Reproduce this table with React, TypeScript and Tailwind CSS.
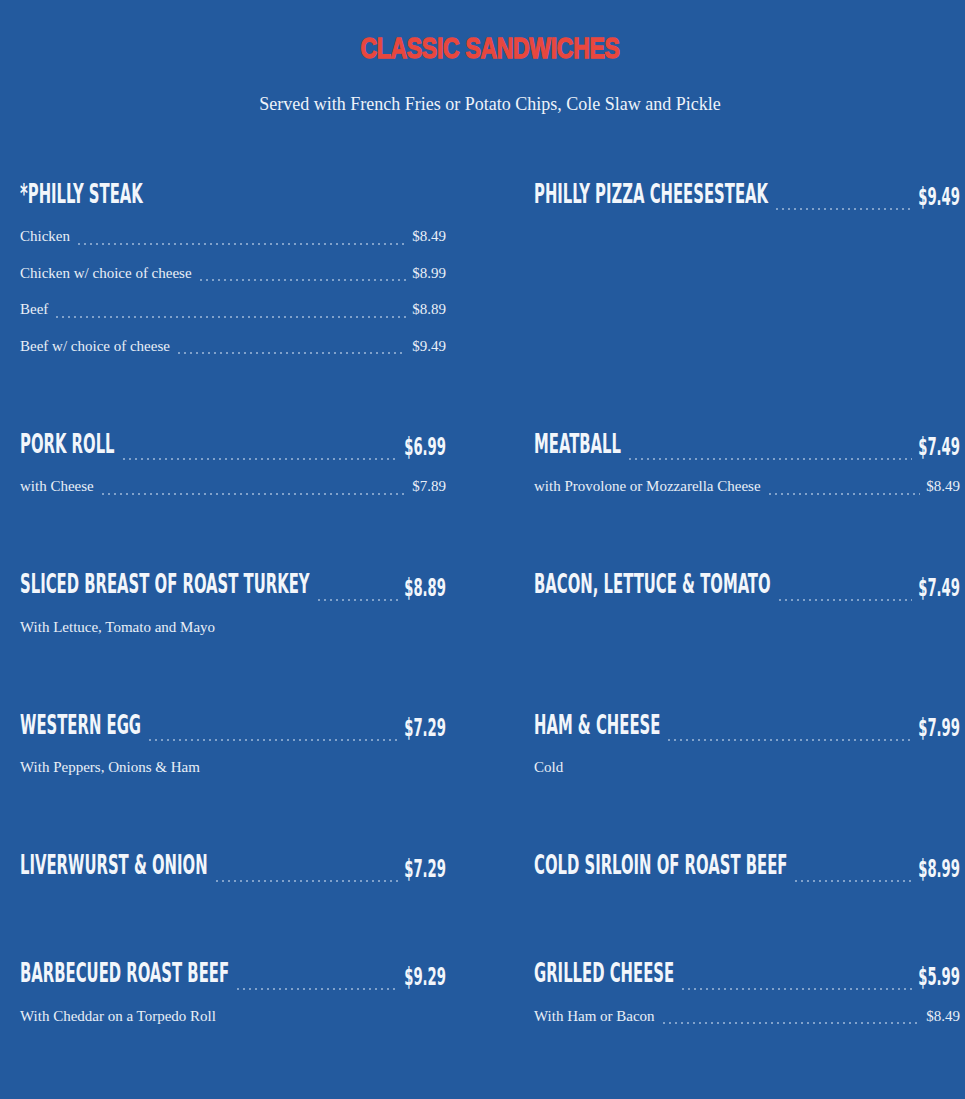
import React from "react";

type Sub = { name: string; price?: string };
type Section = { title: string; price?: string; subs?: Sub[] };

const rows: [Section, Section][] = [
  [
    {
      title: "*PHILLY STEAK",
      subs: [
        { name: "Chicken", price: "$8.49" },
        { name: "Chicken w/ choice of cheese", price: "$8.99" },
        { name: "Beef", price: "$8.89" },
        { name: "Beef w/ choice of cheese", price: "$9.49" },
      ],
    },
    { title: "PHILLY PIZZA CHEESESTEAK", price: "$9.49" },
  ],
  [
    { title: "PORK ROLL", price: "$6.99", subs: [{ name: "with Cheese", price: "$7.89" }] },
    {
      title: "MEATBALL",
      price: "$7.49",
      subs: [{ name: "with Provolone or Mozzarella Cheese", price: "$8.49" }],
    },
  ],
  [
    {
      title: "SLICED BREAST OF ROAST TURKEY",
      price: "$8.89",
      subs: [{ name: "With Lettuce, Tomato and Mayo" }],
    },
    { title: "BACON, LETTUCE & TOMATO", price: "$7.49" },
  ],
  [
    { title: "WESTERN EGG", price: "$7.29", subs: [{ name: "With Peppers, Onions & Ham" }] },
    { title: "HAM & CHEESE", price: "$7.99", subs: [{ name: "Cold" }] },
  ],
  [
    { title: "LIVERWURST & ONION", price: "$7.29" },
    { title: "COLD SIRLOIN OF ROAST BEEF", price: "$8.99" },
  ],
  [
    {
      title: "BARBECUED ROAST BEEF",
      price: "$9.29",
      subs: [{ name: "With Cheddar on a Torpedo Roll" }],
    },
    { title: "GRILLED CHEESE", price: "$5.99", subs: [{ name: "With Ham or Bacon", price: "$8.49" }] },
  ],
];

const narrow = {
  fontFamily: '"DejaVu Sans Condensed", "Liberation Sans Narrow", "Liberation Sans", sans-serif',
};

function Leader() {
  return (
    <div className="mx-[6px] h-[2px] flex-1 bg-[radial-gradient(circle,rgba(205,220,240,0.75)_0.6px,transparent_1px)] bg-[length:6px_2px] bg-repeat-x" />
  );
}

function MenuSection({ s }: { s: Section }) {
  return (
    <div className="min-h-[56px]">
      <div className="flex h-[42px] items-end">
        <span
          className="inline-block origin-bottom scale-y-[1.58] whitespace-nowrap text-[16.5px] font-bold leading-none text-[#f2f6fb]"
          style={narrow}
        >
          {s.title}
        </span>
        {s.price && (
          <>
            <div className="mb-[-2px] flex-1 self-end">
              <div className="flex">
                <Leader />
              </div>
            </div>
            <span
              className="mb-[-2px] inline-block origin-bottom scale-y-[1.66] whitespace-nowrap text-[14.7px] font-bold leading-none text-[#f2f6fb]"
              style={narrow}
            >
              {s.price}
            </span>
          </>
        )}
      </div>
      {s.subs && (
        <div className="mt-[10px]">
          {s.subs.map((sub) => (
            <div
              key={sub.name}
              className="flex h-[36.5px] items-center font-['Liberation_Serif',serif] text-[15px] text-[#e9eff7]"
            >
              <div className="flex w-full items-baseline">
                <span className="whitespace-nowrap">{sub.name}</span>
                {sub.price && (
                  <>
                    <div className="flex-1 self-end pb-[3px]">
                      <div className="flex">
                        <Leader />
                      </div>
                    </div>
                    <span className="whitespace-nowrap">{sub.price}</span>
                  </>
                )}
              </div>
            </div>
          ))}
        </div>
      )}
    </div>
  );
}

export default function App() {
  return (
    <div className="min-h-[1099px] w-full bg-[#235a9e] pb-[40px] pl-[20px] pr-[5px] pt-[30px]">
      <div className="flex h-[36px] items-center justify-center">
        <h1 className="origin-center scale-y-[1.3] font-['Liberation_Sans',sans-serif] text-[23px] font-bold leading-none tracking-[-0.3px] text-[#e8473e] [-webkit-text-stroke:1px_#e8473e]">
          CLASSIC SANDWICHES
        </h1>
      </div>
      <p className="mt-[26px] text-center font-['Liberation_Serif',serif] text-[18px] leading-[24px] text-[#eef3fa]">
        Served with French Fries or Potato Chips, Cole Slaw and Pickle
      </p>
      <div className="mt-[50px] grid grid-cols-2 gap-x-[88px] gap-y-[52px]">
        {rows.map(([l, r]) => (
          <React.Fragment key={l.title}>
            <MenuSection s={l} />
            <MenuSection s={r} />
          </React.Fragment>
        ))}
      </div>
    </div>
  );
}
